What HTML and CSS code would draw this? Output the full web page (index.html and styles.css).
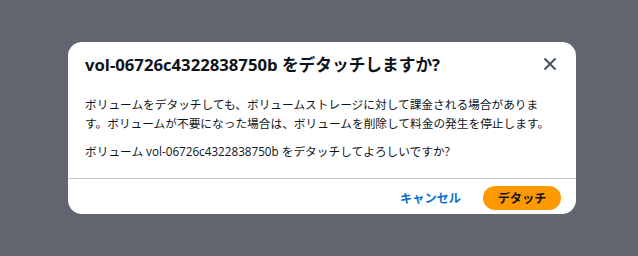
FILE: index.html
```html
<!DOCTYPE html>
<html lang="ja">
<head>
    <meta charset="UTF-8">
    <title>ボリュームのデタッチ</title>
    <link rel="stylesheet" href="styles.css">
</head>
<body>
    <div class="modal">
        <div class="modal-header">
            <h2 class="modal-title">vol-06726c4322838750b をデタッチしますか?</h2>
            <button class="close-btn" aria-label="閉じる">
                <svg width="14" height="14" viewBox="0 0 14 14">
                    <path d="M1.5 1.5l11 11M12.5 1.5l-11 11" stroke="#414d5c" stroke-width="1.8" fill="none"/>
                </svg>
            </button>
        </div>
        <div class="modal-body">
            <p>ボリュームをデタッチしても、ボリュームストレージに対して課金される場合があります。ボリュームが不要になった場合は、ボリュームを削除して料金の発生を停止します。</p>
            <p>ボリューム vol-06726c4322838750b をデタッチしてよろしいですか?</p>
        </div>
        <div class="modal-footer">
            <button class="btn-link">キャンセル</button>
            <button class="btn-primary">デタッチ</button>
        </div>
    </div>
</body>
</html>
```

FILE: styles.css
```css
body{
    margin:0;
    height:256px;
    background:#61656f;
    font-family:"Open Sans","Noto Sans CJK JP",sans-serif;
    color:#0f141a;
    padding:42px 0 0 68px;
    box-sizing:border-box;
}
.modal{
    width:508px;
    background:#fff;
    border-radius:14px;
    overflow:hidden;
}
.modal-header{
    display:flex;
    align-items:center;
    justify-content:space-between;
    padding:0 19px 0 17px;
    height:44px;
}
.modal-title{
    margin:0;
    font-size:16.7px;
    font-weight:700;
}
.close-btn{
    border:none;
    background:none;
    padding:0;
    width:14px;
    height:14px;
    display:flex;
}
.modal-body{
    padding:9px 17px 8px 17px;
    font-size:11.7px;
    line-height:19px;
}
.modal-body p{
    margin:0 0 9px 0;
}
.modal-footer{
    border-top:1px solid #c6c6cd;
    display:flex;
    justify-content:flex-end;
    align-items:center;
    gap:22px;
    padding:7px 15px 4px 0;
    height:24px;
}
.btn-link{
    border:none;
    background:none;
    font-family:inherit;
    font-size:12.2px;
    font-weight:700;
    color:#0972d3;
    padding:0;
}
.btn-primary{
    border:none;
    background:#ff9900;
    border-radius:12px;
    height:24px;
    width:78px;
    font-family:inherit;
    font-size:12.2px;
    font-weight:700;
    color:#0f141a;
}
```
